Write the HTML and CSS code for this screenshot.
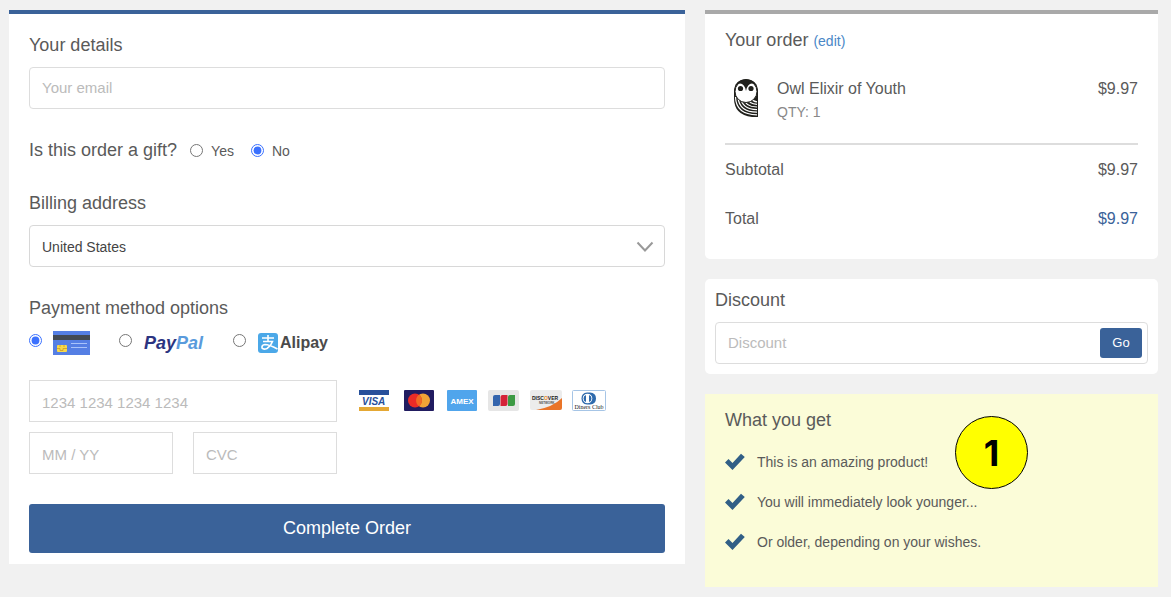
FILE: index.html
```html
<!DOCTYPE html>
<html lang="en">
<head>
  <meta charset="UTF-8">
  <meta name="viewport" content="width=device-width, initial-scale=1.0">
  <title>Checkout</title>
  <link rel="stylesheet" href="styles.css">
</head>
<body>

  <div class="checkout">
    <form class="panel details" action="#">
      <div>
        <h2><label for="email">Your details</label></h2>
        <input class="field" type="email" id="email" placeholder="Your email">
      </div>

      <div class="gift" role="radiogroup" aria-labelledby="gift-title">
        <h2 id="gift-title">Is this order a gift?</h2>
        <label><input type="radio" name="gift" value="yes"> <span>Yes</span></label>
        <label><input type="radio" name="gift" value="no" checked> <span>No</span></label>
      </div>

      <div>
        <h2><label for="country">Billing address</label></h2>
        <div class="select">
          <select class="field" id="country">
            <option>United States</option>
            <option>Canada</option>
            <option>United Kingdom</option>
          </select>
          <svg width="18" height="12" viewBox="0 0 18 12" aria-hidden="true"><path d="M1.500 1.500 9 9.500 16.500 1.500" fill="none" stroke="#999" stroke-width="2"/></svg>
        </div>
      </div>

      <div>
        <h2 id="pay-title">Payment method options</h2>
        <div class="methods" role="radiogroup" aria-labelledby="pay-title">
          <label>
            <input type="radio" name="method" value="card" checked aria-label="Credit card">
            <svg width="37" height="24" viewBox="0 0 37 24">
              <rect width="37" height="24" fill="#557fe4"/>
              <rect y="4" width="37" height="5" fill="#434a54"/>
              <rect x="4" y="14" width="10" height="7" rx="1" fill="#f8d94a"/>
              <path d="M4 17.500h3v2h3v-2h4M7 14v2M11 14v2" fill="none" stroke="#c99a2c" stroke-width=".8"/>
              <path d="M18 12.500h16M18 16.500h16" stroke="#a9c3fa" stroke-width="1"/>
            </svg>
          </label>
          <label>
            <input type="radio" name="method" value="paypal" aria-label="PayPal">
            <svg width="61" height="24" viewBox="0 0 61 24">
              <text x="1" y="18" class="paypal"><tspan fill="#2c3481">Pay</tspan><tspan fill="#5a9bdc">Pal</tspan></text>
            </svg>
          </label>
          <label>
            <input type="radio" name="method" value="alipay" aria-label="Alipay">
            <svg width="74" height="24" viewBox="-1 0 74 24">
              <rect y="2" width="20" height="20" rx="3" fill="#4ba8e8"/>
              <path d="M4 7h12M10 4v7M5 10.500h9.500Q13 15 9 17.500 5.500 19 4 17 3.500 14 7 13.500 11 13.500 19.500 18" fill="none" stroke="#fff" stroke-width="1.600"/>
              <text x="22" y="17" class="alipay">Alipay</text>
            </svg>
          </label>
        </div>

        <div class="card-row">
          <div class="card-fields">
            <input class="field" type="text" placeholder="1234 1234 1234 1234" aria-label="Card number">
            <input class="field" type="text" placeholder="MM / YY" aria-label="Expiry date">
            <input class="field" type="text" placeholder="CVC" aria-label="Security code">
          </div>
          <div class="brands">
            <svg width="33" height="22" viewBox="0 0 33 22">
              <rect x="1" width="30" height="5" fill="#27509b"/>
              <rect x="1" y="17" width="30" height="4" fill="#e5a834"/>
              <text x="4" y="15" class="visa">VISA</text>
            </svg>
            <svg width="35" height="22" viewBox="0 0 35 22">
              <rect x="3" width="30" height="21" rx="1" fill="#211c60"/>
              <circle cx="22" cy="10.500" r="7" fill="#f2a336"/>
              <circle cx="14" cy="10.500" r="7" fill="#ea2b27"/>
              <path d="M18 4.800a7 7 0 0 1 0 11.400 7 7 0 0 1 0-11.400z" fill="#f06a24"/>
            </svg>
            <svg width="32" height="22" viewBox="0 0 32 22">
              <rect x="1" width="30" height="21" rx="1" fill="#50a5ec"/>
              <text x="16" y="14" text-anchor="middle" class="amex">AMEX</text>
            </svg>
            <svg width="32" height="22" viewBox="0 0 32 22">
              <rect width="31" height="21" rx="2" fill="#e6e6e6"/>
              <path d="M7 5h5v9q0 2-2 2H5V7q0-2 2-2z" fill="#3465ad"/>
              <path d="M14.500 5h5v9q0 2-2 2h-5V7q0-2 2-2z" fill="#d52338"/>
              <path d="M22 5h5v9q0 2-2 2h-5V7q0-2 2-2z" fill="#3c9a44"/>
            </svg>
            <svg width="32" height="22" viewBox="0 0 32 22">
              <rect width="32" height="20" rx="2" fill="#ececec"/>
              <path d="M32 8v10q0 2-2 2H6Q23 17 32 8z" fill="#ea7428"/>
              <text x="2" y="10" class="discover">DISC<tspan fill="#ea8a28">O</tspan>VER</text>
              <text x="9" y="14" class="network">NETWORK</text>
            </svg>
            <svg width="34" height="22" viewBox="0 0 34 22">
              <rect x=".5" y=".5" width="33" height="20" rx="1" fill="#fff" stroke="#a6c5e6"/>
              <path d="M15 2.500h3q6 .5 6 6t-6 6h-3q-5.500-.5-5.500-6t5.500-6z" fill="#2f6bad"/>
              <circle cx="15.500" cy="8.500" r="4.800" fill="#fff"/>
              <path d="M14 5v7a3.700 3.700 0 0 1 0-7zM17 5v7a3.700 3.700 0 0 0 0-7z" fill="#2f6bad"/>
              <text x="17" y="19" text-anchor="middle" class="diners">Diners Club</text>
            </svg>
          </div>
        </div>
      </div>

      <button type="submit" class="btn complete">Complete Order</button>
    </form>

    <div class="sidebar">
      <section class="panel order">
        <h2>Your order <a href="#">(edit)</a></h2>
        <div class="product">
          <svg width="40" height="47" viewBox="0 0 40 47" aria-hidden="true">
            <path d="M9 14a12 12 0 0 1 24 0v26h-6Q9 38 9 21z" fill="#20201c"/>
            <path d="M10.500 20Q11 37.500 32 37.800M13 20Q14 35 32 35.200M15.500 20Q17 32.500 32 32.600M18 20Q20 30 32 30M21 20Q24 27 32 27.400M25 21Q28 24.500 32 24.800" fill="none" stroke="#fff" stroke-width="1.200"/>
            <circle cx="21" cy="14.500" r="11" fill="#fff" stroke="#20201c"/>
            <path d="M9.500 12Q10.500 2.500 21 2.500T32.500 12Q32 6.500 27 6.500 22.500 6.500 21 14 19.500 6.500 15 6.500 10 6.500 9.500 12z" fill="#20201c"/>
            <circle cx="15.500" cy="11.500" r="2.600" fill="#20201c"/>
            <circle cx="26" cy="11.500" r="2.600" fill="#20201c"/>
          </svg>
          <div class="product-name">Owl Elixir of Youth<small>QTY: 1</small></div>
          <span>$9.97</span>
        </div>
        <div class="line"><span>Subtotal</span><span>$9.97</span></div>
        <div class="line total"><span>Total</span><span>$9.97</span></div>
      </section>

      <form class="panel discount" action="#">
        <h2><label for="discount">Discount</label></h2>
        <div class="discount-box">
          <input type="text" id="discount" placeholder="Discount">
          <button type="submit" class="btn">Go</button>
        </div>
      </form>

      <section class="benefits">
        <h2>What you get</h2>
        <ul>
          <li><svg width="20" height="18" viewBox="0 0 20 18"><path d="M0 9.500 3.500 6 7.500 10 16 .8 19.800 4 7.500 17z" fill="#315f86"/></svg>This is an amazing product!</li>
          <li><svg width="20" height="18" viewBox="0 0 20 18"><path d="M0 9.500 3.500 6 7.500 10 16 .8 19.800 4 7.500 17z" fill="#315f86"/></svg>You will immediately look younger...</li>
          <li><svg width="20" height="18" viewBox="0 0 20 18"><path d="M0 9.500 3.500 6 7.500 10 16 .8 19.800 4 7.500 17z" fill="#315f86"/></svg>Or older, depending on your wishes.</li>
        </ul>
        <div class="badge">1</div>
      </section>
    </div>
  </div>

</body>
</html>
```
FILE: styles.css
```css
* {
  box-sizing: border-box;
}

body {
  margin: 0;
  background: #f1f1f1;
  color: #5a5a5a;
  font-family: "Liberation Sans", Arial, sans-serif;
  font-size: 14px;
}

h2 {
  margin: 0 0 11px;
  font-size: 18px;
  font-weight: normal;
  line-height: 22px;
}

a {
  color: #4a87c7;
  font-size: 14px;
  text-decoration: none;
}

input,
select,
button {
  font-family: inherit;
}

input[type="radio"] {
  width: 13px;
  height: 13px;
  margin: 0;
  accent-color: #3b71fe;
}

::placeholder {
  color: #bbb;
  opacity: 1;
}

svg {
  display: block;
  flex: none;
}

.checkout {
  display: grid;
  grid-template-columns: minmax(0, 1fr) 453px;
  align-items: start;
  gap: 20px;
  padding: 10px 13px 10px 9px;
}

.panel {
  background: #fff;
}

.details {
  display: flex;
  flex-direction: column;
  gap: 30px;
  padding: 20px 20px 11px;
  border-top: 4px solid #3a6299;
}

.field {
  display: block;
  width: 100%;
  height: 42px;
  padding: 0 12px 2px;
  border: 1px solid #ddd;
  border-radius: 4px;
  background: #fff;
  color: #444;
  font-size: 15px;
}

/* gift question */
.gift {
  display: flex;
  align-items: center;
  gap: 17px;
  min-height: 23px;
  padding-bottom: 1px;
}

.gift h2 {
  margin: 0 -4px 0 0;
}

.gift label {
  display: flex;
  align-items: center;
  gap: 8px;
}

.gift span {
  padding-top: 2px;
}

/* country */
.select {
  position: relative;
}

.select .field {
  appearance: none;
  padding: 2px 12px 0;
  border-color: #d8d8d8;
  font-size: 14px;
}

.select svg {
  position: absolute;
  top: 16px;
  right: 11px;
  pointer-events: none;
}

/* payment */
.methods {
  display: flex;
  gap: 29px;
  height: 26px;
}

.methods label {
  display: flex;
  align-items: center;
  gap: 11px;
}

.methods input {
  margin-bottom: 5px;
}

.paypal {
  font: italic bold 18px "Liberation Sans", sans-serif;
}

.alipay {
  font: bold 16px "Liberation Sans", sans-serif;
  fill: #4a4a4a;
}

.card-row {
  display: flex;
  gap: 21px;
  margin-top: 24px;
}

.card-fields {
  display: grid;
  grid-template-columns: 1fr 1fr;
  gap: 10px 20px;
  width: 308px;
}

.card-fields .field {
  padding: 3px 12px 0;
  border-radius: 0;
}

.card-fields .field:first-child {
  grid-column: span 2;
}

.brands {
  display: flex;
  align-items: center;
  gap: 10px;
  height: 42px;
}

.visa {
  font: italic bold 10px "Liberation Sans", sans-serif;
  fill: #27509b;
}

.amex {
  font: bold 8px "Liberation Sans", sans-serif;
  fill: #fff;
}

.discover {
  font: bold 5px "Liberation Sans", sans-serif;
  fill: #222;
}

.network {
  font: bold 3px "Liberation Sans", sans-serif;
  fill: #555;
}

.diners {
  font: 6px "Liberation Serif", serif;
  fill: #222;
}

.btn {
  border: 0;
  border-radius: 3px;
  background: #3a6299;
  color: #fff;
  font-size: 13px;
  cursor: pointer;
}

.complete {
  height: 49px;
  font-size: 18px;
}

/* right column */
.sidebar {
  display: flex;
  flex-direction: column;
  gap: 20px;
}

.order {
  padding: 15px 20px 28px;
  border-top: 4px solid #a9a9a9;
  border-radius: 0 0 5px 5px;
  font-size: 16px;
  line-height: 24px;
}

.product {
  display: flex;
  gap: 12px;
  margin: 25px 0 13px;
  padding-bottom: 19px;
  border-bottom: 2px solid #ddd;
}

.product-name {
  flex: 1;
}

.product-name small {
  display: block;
  color: #888;
  font-size: 14px;
  line-height: 22px;
}

.line {
  display: flex;
  justify-content: space-between;
}

.total {
  margin-top: 25px;
}

.total span:last-child {
  color: #3a6299;
}

.discount {
  padding: 10px;
  border-radius: 5px;
}

.discount-box {
  display: flex;
  height: 42px;
  padding: 5px;
  border: 1px solid #ddd;
  border-radius: 4px;
}

.discount-box input {
  flex: 1;
  min-width: 0;
  padding: 0 7px 2px;
  border: 0;
  background: none;
  font-size: 15px;
}

.discount-box .btn {
  width: 42px;
  padding-bottom: 3px;
}

.benefits {
  position: relative;
  padding: 15px 20px 25px;
  background: #fbfcd8;
}

.benefits ul {
  margin: 0;
  padding: 0;
  list-style: none;
}

.benefits li {
  display: flex;
  align-items: center;
  gap: 12px;
  height: 40px;
}

.badge {
  position: absolute;
  top: 22px;
  right: 130px;
  display: flex;
  align-items: center;
  justify-content: center;
  width: 73px;
  height: 73px;
  border: 1px solid #000;
  border-radius: 50%;
  background: #ff0;
  color: #000;
  font: bold 36px Inter, sans-serif;
}
```
